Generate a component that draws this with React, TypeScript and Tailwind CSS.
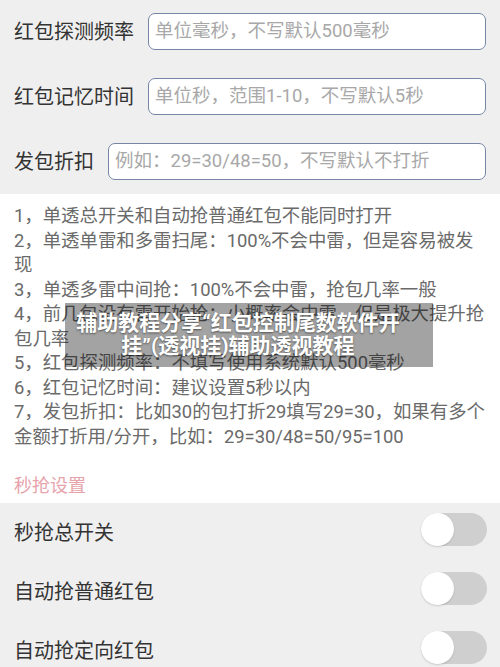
import React from 'react';

const fields = [
  { label: '红包探测频率', placeholder: '单位毫秒，不写默认500毫秒' },
  { label: '红包记忆时间', placeholder: '单位秒，范围1-10，不写默认5秒' },
  { label: '发包折扣', placeholder: '例如：29=30/48=50，不写默认不打折' },
];

const tips = [
  '1，单透总开关和自动抢普通红包不能同时打开',
  '2，单透单雷和多雷扫尾：100%不会中雷，但是容易被发现',
  '3，单透多雷中间抢：100%不会中雷，抢包几率一般',
  '4，前几包没有雷开始抢：小概率会中雷，但是极大提升抢包几率',
  '5，红包探测频率：不填写使用系统默认500毫秒',
  '6，红包记忆时间：建议设置5秒以内',
  '7，发包折扣：比如30的包打折29填写29=30，如果有多个金额打折用/分开，比如：29=30/48=50/95=100',
];

const switches = ['秒抢总开关', '自动抢普通红包', '自动抢定向红包'];

const Toggle: React.FC = () => (
  <div className="w-[66px] h-[33px] mb-[6px] rounded-full bg-[#cfcfcf] flex items-center">
    <div className="w-[33px] h-[33px] rounded-full bg-white shadow-[0_1px_2px_rgba(0,0,0,0.15)]"></div>
  </div>
);

const App: React.FC = () => {
  return (
    <div className="w-[500px] h-[667px] overflow-hidden bg-white font-['Roboto','Noto_Sans_CJK_SC',sans-serif]">
      {/* Input fields */}
      <div className="bg-[#efefef] pt-[13px] pb-[14px] pl-[14px] pr-[14px] flex flex-col gap-[28px]">
        {fields.map((f) => (
          <div key={f.label} className="flex items-center h-[37px]">
            <span className="text-[20px] text-[#333] whitespace-nowrap">{f.label}</span>
            <div className="ml-[14px] flex-1 h-full bg-white border-[1.5px] border-[#7886a6] rounded-[7px] flex items-center px-[6px]">
              <span className="text-[18.5px] text-[#a8a8a8] whitespace-nowrap">{f.placeholder}</span>
            </div>
          </div>
        ))}
      </div>

      {/* Notes */}
      <div className="relative pl-[14px] pr-[12px] pt-[10px]">
        {tips.map((t) => (
          <p key={t} className="text-[18.4px] leading-[24.5px] text-[#6a6a6a]">{t}</p>
        ))}
        <div className="absolute left-[65px] top-[109px] w-[368px] h-[64px] bg-[rgba(0,0,0,0.36)] flex items-center justify-center pr-[22px]">
          <p className="text-center text-white font-bold text-[21px] leading-[23px] [text-shadow:0_1px_2px_rgba(0,0,0,0.5)]">
            辅助教程分享“红包控制尾数软件开挂”(透视挂)辅助透视教程
          </p>
        </div>
        <div className="pt-[25px] pb-[5px] text-[18px] leading-[24px] text-[#e6a3ab]">秒抢设置</div>
      </div>

      {/* Switches */}
      <div className="bg-[#efefef] pr-[13px] pl-[14px]">
        {switches.map((s) => (
          <div key={s} className="h-[59px] flex items-center justify-between">
            <span className="text-[20px] text-[#333]">{s}</span>
            <Toggle />
          </div>
        ))}
      </div>
    </div>
  );
};

export default App;
